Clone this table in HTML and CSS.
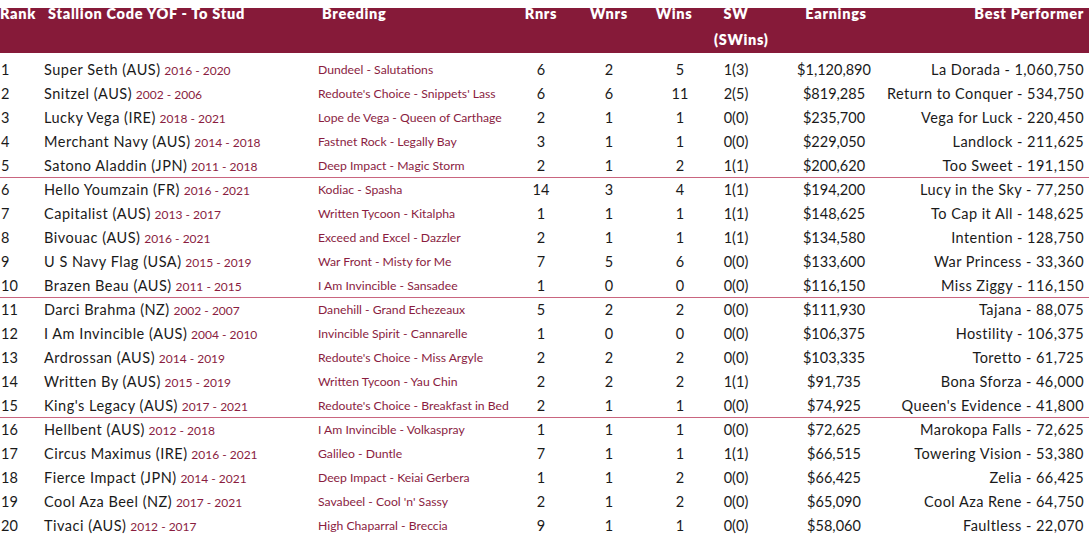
FILE: index.html
```html
<!DOCTYPE html>
<html lang="en">
<head>
<meta charset="utf-8">
<title>Stallions</title>
<link rel="stylesheet" href="styles.css">
</head>
<body>
<div class="table">
  <div class="row head">
    <div class="c rank">Rank</div>
    <div class="c stallion">Stallion Code YOF - To Stud</div>
    <div class="c breeding">Breeding</div>
    <div class="c num">Rnrs</div>
    <div class="c num">Wnrs</div>
    <div class="c num wins">Wins</div>
    <div class="c num">SW<br>(SWins)</div>
    <div class="c num earn">Earnings</div>
    <div class="c best">Best Performer</div>
  </div>
  <div class="body">
    <div class="row"><div class="c rank">1</div><div class="c stallion"><span class="nm">Super Seth (AUS)</span> <span class="yr">2016 - 2020</span></div><div class="c breeding">Dundeel - Salutations</div><div class="c num">6</div><div class="c num">2</div><div class="c num">5</div><div class="c num">1(3)</div><div class="c num earn">$1,120,890</div><div class="c best">La Dorada - 1,060,750</div></div>
    <div class="row"><div class="c rank">2</div><div class="c stallion"><span class="nm">Snitzel (AUS)</span> <span class="yr">2002 - 2006</span></div><div class="c breeding">Redoute's Choice - Snippets' Lass</div><div class="c num">6</div><div class="c num">6</div><div class="c num">11</div><div class="c num">2(5)</div><div class="c num earn">$819,285</div><div class="c best">Return to Conquer - 534,750</div></div>
    <div class="row"><div class="c rank">3</div><div class="c stallion"><span class="nm">Lucky Vega (IRE)</span> <span class="yr">2018 - 2021</span></div><div class="c breeding">Lope de Vega - Queen of Carthage</div><div class="c num">2</div><div class="c num">1</div><div class="c num">1</div><div class="c num">0(0)</div><div class="c num earn">$235,700</div><div class="c best">Vega for Luck - 220,450</div></div>
    <div class="row"><div class="c rank">4</div><div class="c stallion"><span class="nm">Merchant Navy (AUS)</span> <span class="yr">2014 - 2018</span></div><div class="c breeding">Fastnet Rock - Legally Bay</div><div class="c num">3</div><div class="c num">1</div><div class="c num">1</div><div class="c num">0(0)</div><div class="c num earn">$229,050</div><div class="c best">Landlock - 211,625</div></div>
    <div class="row sep"><div class="c rank">5</div><div class="c stallion"><span class="nm">Satono Aladdin (JPN)</span> <span class="yr">2011 - 2018</span></div><div class="c breeding">Deep Impact - Magic Storm</div><div class="c num">2</div><div class="c num">1</div><div class="c num">2</div><div class="c num">1(1)</div><div class="c num earn">$200,620</div><div class="c best">Too Sweet - 191,150</div></div>
    <div class="row"><div class="c rank">6</div><div class="c stallion"><span class="nm">Hello Youmzain (FR)</span> <span class="yr">2016 - 2021</span></div><div class="c breeding">Kodiac - Spasha</div><div class="c num">14</div><div class="c num">3</div><div class="c num">4</div><div class="c num">1(1)</div><div class="c num earn">$194,200</div><div class="c best">Lucy in the Sky - 77,250</div></div>
    <div class="row"><div class="c rank">7</div><div class="c stallion"><span class="nm">Capitalist (AUS)</span> <span class="yr">2013 - 2017</span></div><div class="c breeding">Written Tycoon - Kitalpha</div><div class="c num">1</div><div class="c num">1</div><div class="c num">1</div><div class="c num">1(1)</div><div class="c num earn">$148,625</div><div class="c best">To Cap it All - 148,625</div></div>
    <div class="row"><div class="c rank">8</div><div class="c stallion"><span class="nm">Bivouac (AUS)</span> <span class="yr">2016 - 2021</span></div><div class="c breeding">Exceed and Excel - Dazzler</div><div class="c num">2</div><div class="c num">1</div><div class="c num">1</div><div class="c num">1(1)</div><div class="c num earn">$134,580</div><div class="c best">Intention - 128,750</div></div>
    <div class="row"><div class="c rank">9</div><div class="c stallion"><span class="nm">U S Navy Flag (USA)</span> <span class="yr">2015 - 2019</span></div><div class="c breeding">War Front - Misty for Me</div><div class="c num">7</div><div class="c num">5</div><div class="c num">6</div><div class="c num">0(0)</div><div class="c num earn">$133,600</div><div class="c best">War Princess - 33,360</div></div>
    <div class="row sep"><div class="c rank">10</div><div class="c stallion"><span class="nm">Brazen Beau (AUS)</span> <span class="yr">2011 - 2015</span></div><div class="c breeding">I Am Invincible - Sansadee</div><div class="c num">1</div><div class="c num">0</div><div class="c num">0</div><div class="c num">0(0)</div><div class="c num earn">$116,150</div><div class="c best">Miss Ziggy - 116,150</div></div>
    <div class="row"><div class="c rank">11</div><div class="c stallion"><span class="nm">Darci Brahma (NZ)</span> <span class="yr">2002 - 2007</span></div><div class="c breeding">Danehill - Grand Echezeaux</div><div class="c num">5</div><div class="c num">2</div><div class="c num">2</div><div class="c num">0(0)</div><div class="c num earn">$111,930</div><div class="c best">Tajana - 88,075</div></div>
    <div class="row"><div class="c rank">12</div><div class="c stallion"><span class="nm">I Am Invincible (AUS)</span> <span class="yr">2004 - 2010</span></div><div class="c breeding">Invincible Spirit - Cannarelle</div><div class="c num">1</div><div class="c num">0</div><div class="c num">0</div><div class="c num">0(0)</div><div class="c num earn">$106,375</div><div class="c best">Hostility - 106,375</div></div>
    <div class="row"><div class="c rank">13</div><div class="c stallion"><span class="nm">Ardrossan (AUS)</span> <span class="yr">2014 - 2019</span></div><div class="c breeding">Redoute's Choice - Miss Argyle</div><div class="c num">2</div><div class="c num">2</div><div class="c num">2</div><div class="c num">0(0)</div><div class="c num earn">$103,335</div><div class="c best">Toretto - 61,725</div></div>
    <div class="row"><div class="c rank">14</div><div class="c stallion"><span class="nm">Written By (AUS)</span> <span class="yr">2015 - 2019</span></div><div class="c breeding">Written Tycoon - Yau Chin</div><div class="c num">2</div><div class="c num">2</div><div class="c num">2</div><div class="c num">1(1)</div><div class="c num earn">$91,735</div><div class="c best">Bona Sforza - 46,000</div></div>
    <div class="row sep"><div class="c rank">15</div><div class="c stallion"><span class="nm">King's Legacy (AUS)</span> <span class="yr">2017 - 2021</span></div><div class="c breeding">Redoute's Choice - Breakfast in Bed</div><div class="c num">2</div><div class="c num">1</div><div class="c num">1</div><div class="c num">0(0)</div><div class="c num earn">$74,925</div><div class="c best">Queen's Evidence - 41,800</div></div>
    <div class="row"><div class="c rank">16</div><div class="c stallion"><span class="nm">Hellbent (AUS)</span> <span class="yr">2012 - 2018</span></div><div class="c breeding">I Am Invincible - Volkaspray</div><div class="c num">1</div><div class="c num">1</div><div class="c num">1</div><div class="c num">0(0)</div><div class="c num earn">$72,625</div><div class="c best">Marokopa Falls - 72,625</div></div>
    <div class="row"><div class="c rank">17</div><div class="c stallion"><span class="nm">Circus Maximus (IRE)</span> <span class="yr">2016 - 2021</span></div><div class="c breeding">Galileo - Duntle</div><div class="c num">7</div><div class="c num">1</div><div class="c num">1</div><div class="c num">1(1)</div><div class="c num earn">$66,515</div><div class="c best">Towering Vision - 53,380</div></div>
    <div class="row"><div class="c rank">18</div><div class="c stallion"><span class="nm">Fierce Impact (JPN)</span> <span class="yr">2014 - 2021</span></div><div class="c breeding">Deep Impact - Keiai Gerbera</div><div class="c num">1</div><div class="c num">1</div><div class="c num">2</div><div class="c num">0(0)</div><div class="c num earn">$66,425</div><div class="c best">Zelia - 66,425</div></div>
    <div class="row"><div class="c rank">19</div><div class="c stallion"><span class="nm">Cool Aza Beel (NZ)</span> <span class="yr">2017 - 2021</span></div><div class="c breeding">Savabeel - Cool 'n' Sassy</div><div class="c num">2</div><div class="c num">1</div><div class="c num">2</div><div class="c num">0(0)</div><div class="c num earn">$65,090</div><div class="c best">Cool Aza Rene - 64,750</div></div>
    <div class="row"><div class="c rank">20</div><div class="c stallion"><span class="nm">Tivaci (AUS)</span> <span class="yr">2012 - 2017</span></div><div class="c breeding">High Chaparral - Breccia</div><div class="c num">9</div><div class="c num">1</div><div class="c num">1</div><div class="c num">0(0)</div><div class="c num earn">$58,060</div><div class="c best">Faultless - 22,070</div></div>
  </div>
</div>
</body>
</html>
```

FILE: styles.css
```css
html, body {
  margin: 0;
  padding: 0;
  background: #ffffff;
}
body {
  font-family: "Lato", "Liberation Sans", sans-serif;
  color: #1a1a1a;
  width: 1089px;
  height: 555px;
  overflow: hidden;
}
.table {
  width: 1089px;
}
.row {
  display: grid;
  grid-template-columns: 44px 274px 192px 62px 74px 68px 44px 152px 174px;
  padding-right: 5px;
  height: 24px;
  line-height: 24px;
  font-size: 14.5px;
  box-sizing: border-box;
}
.head {
  height: 53px;
  line-height: 26px;
  padding-top: 1px;
  background: linear-gradient(to bottom, #ffffff 0, #ffffff 8px, #861a39 8px);
  color: #ffffff;
  font-weight: 800;
  font-size: 14.5px;
  letter-spacing: 0.7px;
}
.head .stallion { padding-left: 4px; }
.head .breeding { padding-left: 4px; }
.head .wins { padding-right: 12px; }
.head .earn { padding-left: 4px; }
.body {
  margin-top: 5px;
}
.c {
  white-space: nowrap;
}
.rank { padding-left: 1px; }
.head .rank { padding-left: 0; }
.num { text-align: center; }
.best {
  display: flex;
  justify-content: flex-end;
}
.body .best { letter-spacing: 0.45px; }
.nm { letter-spacing: 0.5px; }
.yr {
  color: #8a1d3f;
  font-size: 12px;
}
.breeding {
  color: #8a1d3f;
  font-size: 12.2px;
}
.head .breeding { color: #ffffff; font-size: 14.5px; }
.sep {
  border-bottom: 1px solid #c9657f;
}
```
